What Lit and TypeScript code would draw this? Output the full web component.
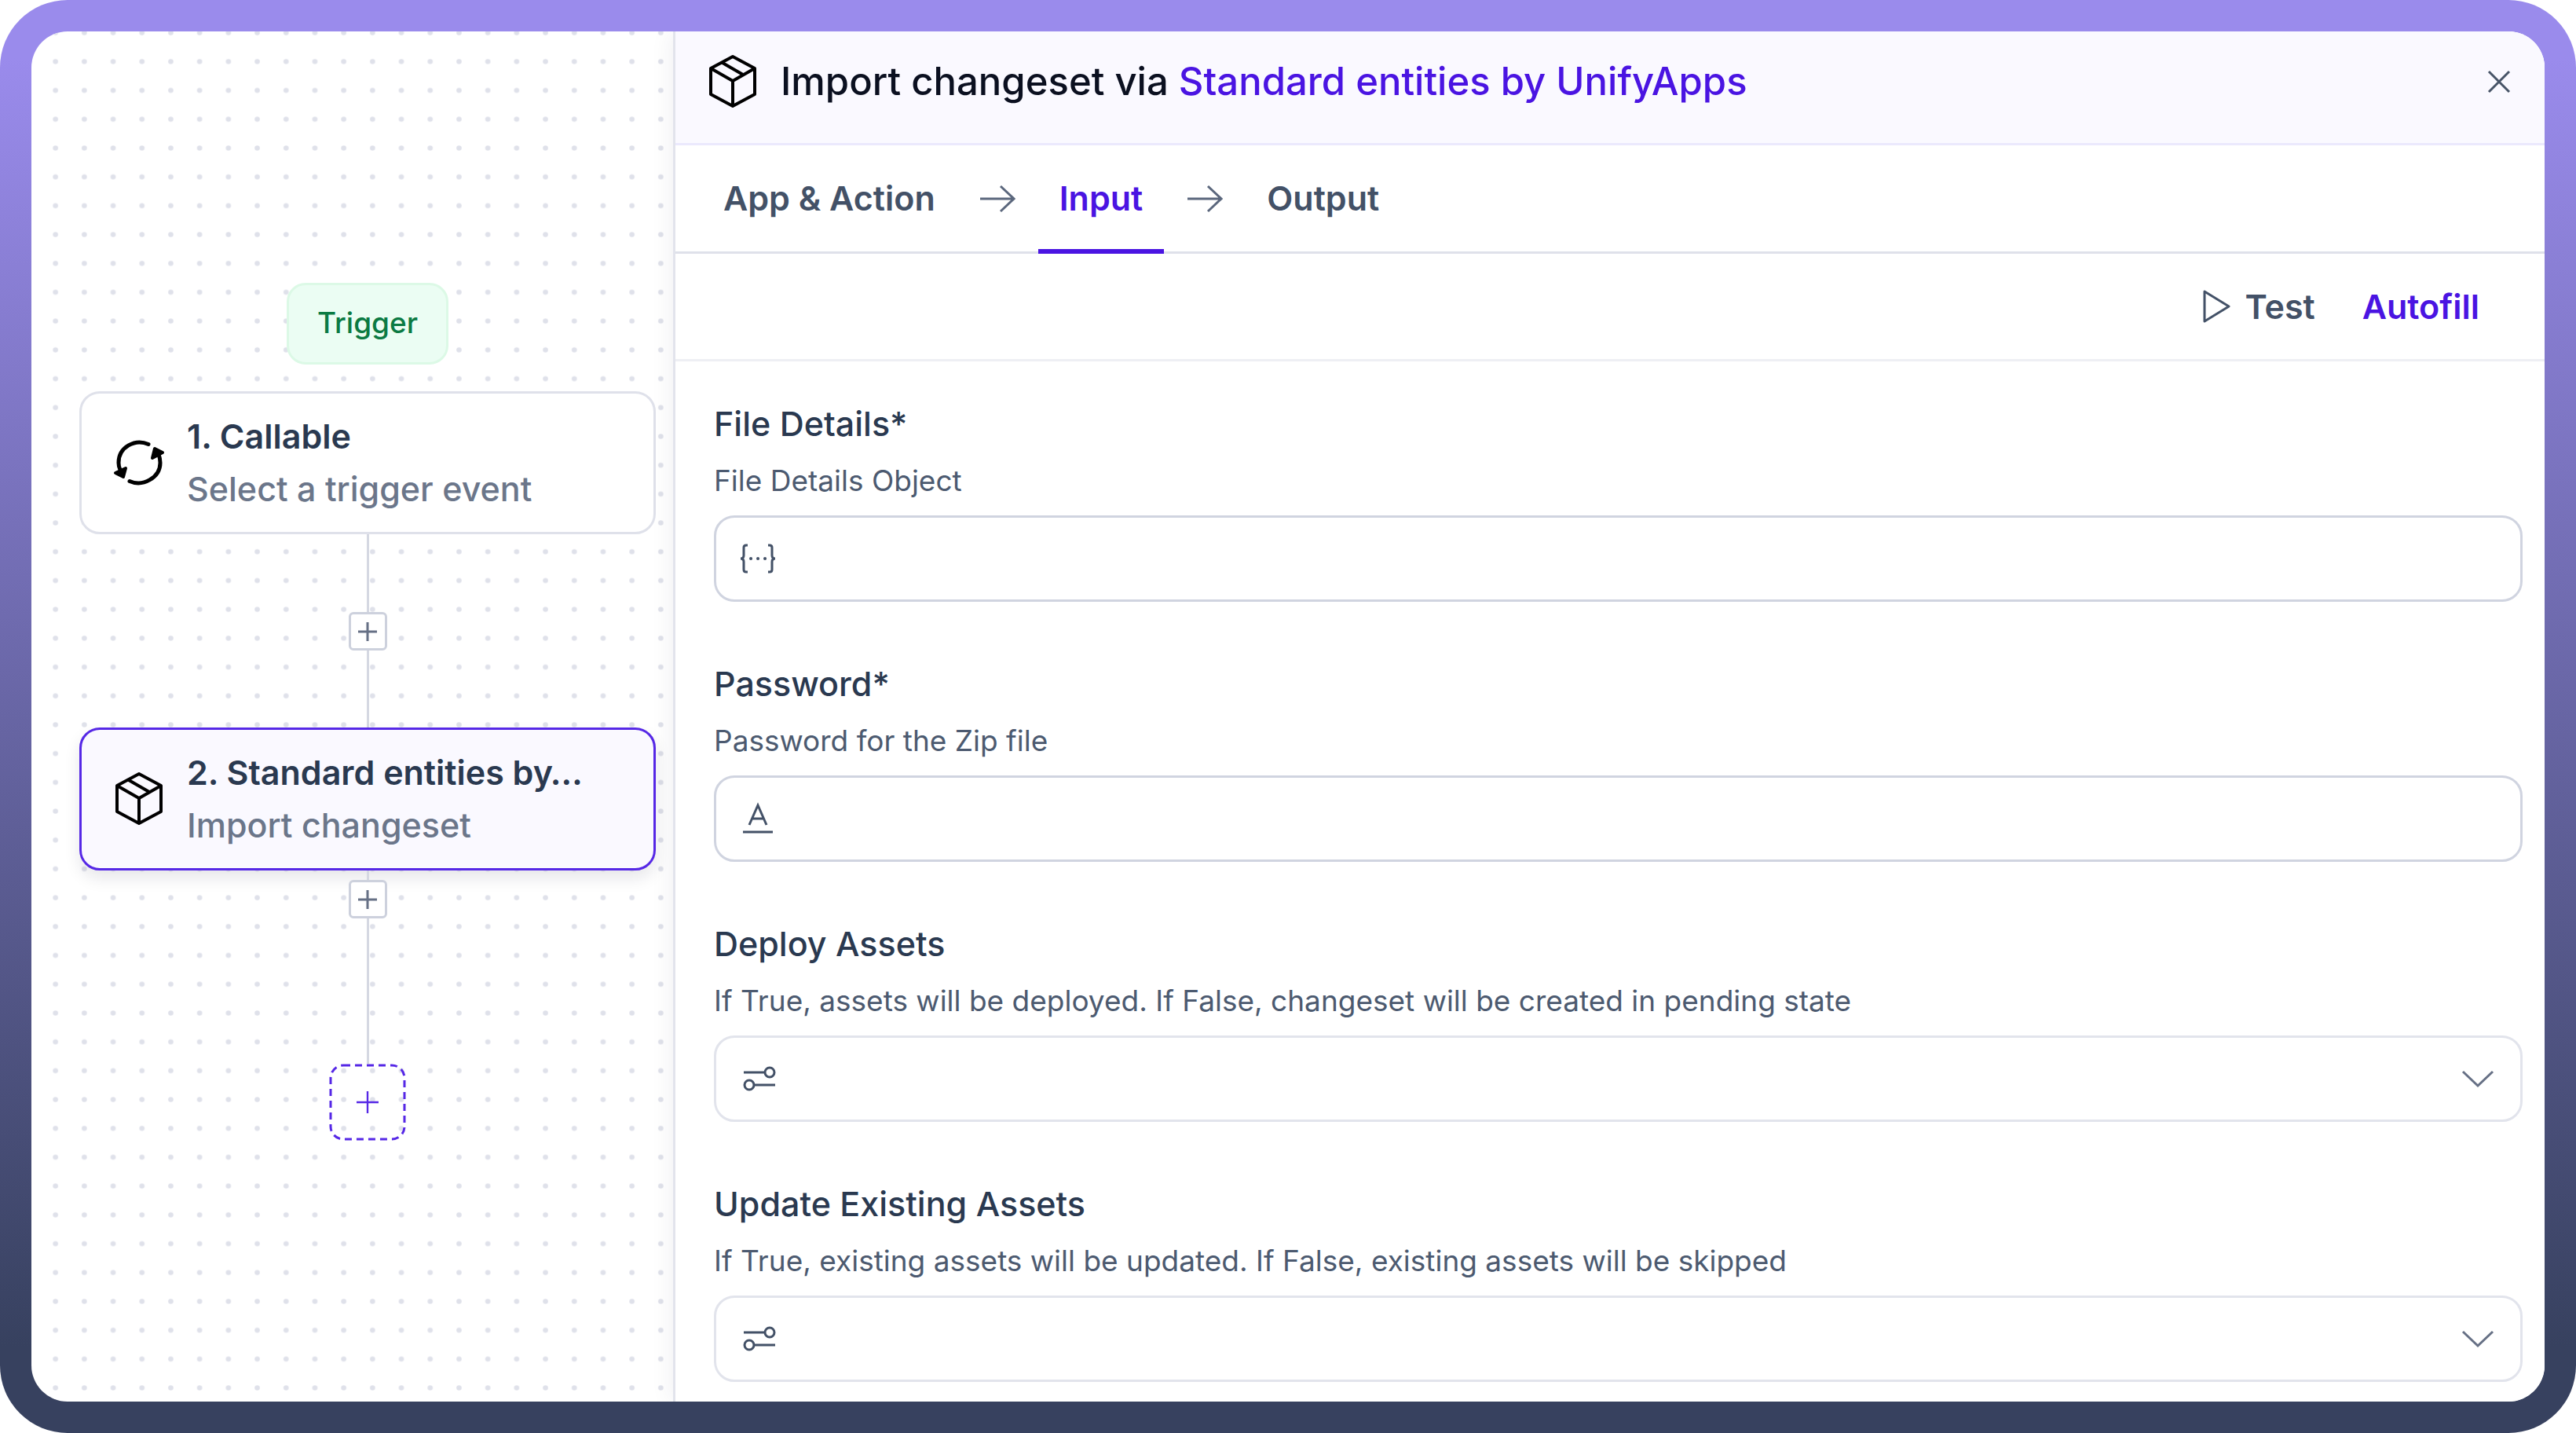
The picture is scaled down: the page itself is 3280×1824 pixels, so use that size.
import { LitElement, html, css, svg } from "lit";
import { customElement } from "lit/decorators.js";

const cube = html`<svg class="cube" viewBox="0 0 66 70" aria-hidden="true">
  <path d="M33 3 L61 18 V51 L33 66 L5 51 V18 Z M5 18 L33 34 L61 18 M33 34 V66 M20 11 L46 26" />
</svg>`;

const sync = html`<svg class="sync" viewBox="0 0 66 66" aria-hidden="true">
  <path class="arc" d="M45 9.5 C28 2 7 13 7 33 Q7 38 9 42" />
  <path class="arc" d="M21 56.5 C38 64 60 52 60 33 Q60 28 58 22" />
  <path class="tip" d="M3 46 L16 40 L13 51 Z M63 20 L50 27 L53 15 Z" />
</svg>`;

const plus = html`<svg class="plus" viewBox="0 0 24 24" aria-hidden="true"><path d="M12 0 V24 M0 12 H24" /></svg>`;
const arrow = html`<svg class="arrow" viewBox="0 0 46 36" aria-hidden="true"><path d="M1 18 H44 M27 2 L44 18 L27 34" /></svg>`;
const chevron = html`<svg class="chevron" viewBox="0 0 44 24" aria-hidden="true"><path d="M3 3 L22 21 L41 3" /></svg>`;

const kinds: Record<string, unknown> = {
  object: svg`<path d="M11 5 H9 Q6 5 6 8 V18 Q6 22 2 22 Q6 22 6 26 V36 Q6 39 9 39 H11 M37 5 H39 Q42 5 42 8 V18 Q42 22 46 22 Q42 22 42 26 V36 Q42 39 39 39 H37" /><path class="dots" d="M15 22 h.1 M24 22 h.1 M33 22 h.1" />`,
  text: svg`<path d="M13 30 L24 5 L35 30 M17 22 H31 M5 39 H43" />`,
  toggle: svg`<path d="M6 14 H32 M20 30 H46" /><circle cx="39" cy="14" r="6" /><circle cx="13" cy="30" r="6" />`,
};

const fields = [
  { id: "file-details", label: "File Details*", hint: "File Details Object", kind: "object", select: false },
  { id: "password", label: "Password*", hint: "Password for the Zip file", kind: "text", select: false },
  { id: "deploy", label: "Deploy Assets", hint: "If True, assets will be deployed. If False, changeset will be created in pending state", kind: "toggle", select: true },
  { id: "update", label: "Update Existing Assets", hint: "If True, existing assets will be updated. If False, existing assets will be skipped", kind: "toggle", select: true },
];

@customElement("app-root")
export class AppRoot extends LitElement {
  static styles = css`
    :host {
      display: block;
      font-family: Inter, "Liberation Sans", sans-serif;
      color: #2a3950;
      --purple: #4a14e2;
      --line: #dfe1ea;
    }
    * { box-sizing: border-box; }
    svg { display: block; flex: none; fill: none; stroke: currentColor; }
    button { font: inherit; color: inherit; background: none; border: 0; padding: 0; margin: 0; cursor: pointer; }
    .frame {
      min-height: 100vh;
      padding: 40px;
      border-radius: 86px;
      background: linear-gradient(#9a8bec 0%, #9a8bec 4%, #37415f 94%, #37415f 100%);
      display: flex;
    }
    .window {
      flex: 1;
      display: grid;
      grid-template-columns: minmax(0, 820px) minmax(0, 1fr);
      background: #fff;
      border-radius: 46px;
      overflow: hidden;
    }
    .canvas { position: relative; padding: 320px 25px 0 61px; display: flex; flex-direction: column; align-items: center; }
    .grid { position: absolute; inset: 0; width: 100%; height: 100%; stroke: none; }
    .grid circle { fill: #dfe1ea; }
    .flow { position: relative; width: 100%; display: flex; flex-direction: column; align-items: center; }
    .trigger {
      border: 3px solid #dcf9e6;
      border-radius: 24px;
      background: #ebfdf3;
      color: #0b7a43;
      font-size: 37px;
      font-weight: 500;
      line-height: 56px;
      padding: 20px 36px 22px;
      margin-bottom: 34px;
    }
    .node {
      width: 100%;
      display: flex;
      align-items: center;
      gap: 28px;
      padding: 21px 40px;
      border: 3px solid var(--line);
      border-radius: 26px;
      background: #fff;
      text-align: left;
    }
    .node.active { border-color: #5628e6; background: #faf9ff; box-shadow: 0 10px 20px rgba(20, 20, 50, 0.1); }
    .node-text { min-width: 0; display: flex; flex-direction: column; font-size: 43px; line-height: 67px; white-space: nowrap; }
    .node-title { font-weight: 600; }
    .node-sub { font-weight: 500; color: #6b768a; }
    .sync { width: 66px; height: 66px; color: #000; }
    .sync .arc { stroke-width: 5; stroke-linecap: round; }
    .sync .tip { fill: currentColor; stroke-width: 4; stroke-linejoin: round; }
    .cube { width: 66px; height: 70px; color: #000; stroke-width: 4; stroke-linejoin: round; }
    .wire { width: 3px; background: #d5d8e2; }
    .w-top { height: 99px; }
    .w-mid { height: 98px; }
    .w-short { height: 12px; }
    .w-long { height: 185px; }
    .add {
      width: 49px;
      height: 49px;
      border: 3px solid #cdd1dd;
      border-radius: 6px;
      background: #fff;
      color: #667085;
      display: grid;
      place-items: center;
    }
    .plus { width: 24px; height: 24px; stroke-width: 3; }
    .add-end { width: 98px; height: 98px; color: #5628e6; display: grid; place-items: center; }
    .add-end > * { grid-area: 1 / 1; }
    .dash { width: 98px; height: 98px; stroke-width: 3; stroke-dasharray: 9 6; }
    .add-end .plus { width: 28px; height: 28px; stroke-width: 2; }

    .panel { border-left: 3px solid #e2e4ec; margin-left: -3px; background: #fff; position: relative; box-shadow: -6px 0 24px rgba(20, 20, 50, 0.05); }
    .head { display: flex; align-items: center; gap: 28px; height: 145px; padding: 0 43px 14px 40px; background: #faf9ff; border-bottom: 3px solid #ebe9fd; }
    .title { flex: 1; margin: 0; font-size: 49px; line-height: 64px; font-weight: 500; color: #0b1020; }
    .title a { color: var(--purple); text-decoration: none; }
    .close { color: #475467; }
    .close svg { width: 30px; height: 30px; stroke-width: 3; }
    .tabs { display: flex; align-items: stretch; height: 138px; padding: 0 34px; border-bottom: 3px solid var(--line); font-size: 43px; font-weight: 600; color: #435167; }
    .tab { padding: 0 27px 4px; margin-bottom: -3px; border-bottom: 6px solid transparent; border-top: 6px solid transparent; }
    .tab.on { color: var(--purple); border-bottom-color: var(--purple); }
    .arrow { width: 46px; height: 36px; margin: 0 29px; align-self: center; stroke-width: 3; color: #5b677d; }
    .tools { display: flex; align-items: center; justify-content: flex-end; gap: 60px; height: 137px; padding-right: 83px; border-bottom: 3px solid #eeeff4; font-size: 43px; font-weight: 600; color: #435167; }
    .test { display: flex; align-items: center; gap: 18px; }
    .play { width: 36px; height: 42px; stroke-width: 3; stroke-linejoin: round; }
    .auto { color: var(--purple); }
    .form { display: flex; flex-direction: column; gap: 70px; padding: 45px 28px 24px 49px; }
    .field { display: flex; flex-direction: column; }
    .label { font-size: 43px; line-height: 68px; font-weight: 500; }
    .hint { margin: 0 0 5px; font-size: 37px; line-height: 78px; color: #4c5a70; }
    .box { display: grid; align-items: center; }
    .box > * { grid-area: 1 / 1; }
    .control {
      appearance: none;
      width: 100%;
      height: 110px;
      margin: 0;
      padding: 0 100px;
      border: 3px solid #d0d4e0;
      border-radius: 26px;
      background: #fff;
      font: inherit;
      font-size: 43px;
      color: inherit;
    }
    select.control { border-color: #e2e4ec; }
    .kind { width: 48px; height: 44px; margin-left: 32px; stroke-width: 3; color: #435167; pointer-events: none; z-index: 1; }
    .kind .dots { stroke-width: 4; stroke-linecap: round; }
    .chevron { width: 44px; height: 24px; margin-right: 35px; justify-self: end; stroke-width: 3; color: #667085; pointer-events: none; z-index: 1; }
  `;

  render() {
    return html`<div class="frame">
      <div class="window">
        <section class="canvas" aria-label="Workflow">
          <svg class="grid" aria-hidden="true">
            <defs>
              <pattern id="dots" x="12.3" y="20" width="36.7" height="36.7" patternUnits="userSpaceOnUse">
                <circle cx="18.35" cy="18.35" r="3.3" />
              </pattern>
            </defs>
            <rect width="100%" height="100%" fill="url(#dots)" />
          </svg>
          <div class="flow">
            <span class="trigger">Trigger</span>
            <button class="node">${sync}
              <span class="node-text"><span class="node-title">1. Callable</span><span class="node-sub">Select a trigger event</span></span>
            </button>
            <span class="wire w-top"></span>
            <button class="add" aria-label="Add step">${plus}</button>
            <span class="wire w-mid"></span>
            <button class="node active">${cube}
              <span class="node-text"><span class="node-title">2. Standard entities by…</span><span class="node-sub">Import changeset</span></span>
            </button>
            <span class="wire w-short"></span>
            <button class="add" aria-label="Add step">${plus}</button>
            <span class="wire w-long"></span>
            <button class="add-end" aria-label="Add final step">
              <svg class="dash" viewBox="0 0 98 98" aria-hidden="true"><rect x="2" y="2" width="94" height="94" rx="16" /></svg>
              ${plus}
            </button>
          </div>
        </section>
        <main class="panel">
          <header class="head">
            ${cube}
            <h1 class="title">Import changeset via <a href="#app">Standard entities by UnifyApps</a></h1>
            <button class="close" aria-label="Close"><svg viewBox="0 0 30 30"><path d="M2 2 L28 28 M28 2 L2 28" /></svg></button>
          </header>
          <nav class="tabs">
            <button class="tab">App &amp; Action</button>${arrow}
            <button class="tab on">Input</button>${arrow}
            <button class="tab">Output</button>
          </nav>
          <div class="tools">
            <button class="test"><svg class="play" viewBox="0 0 36 42" aria-hidden="true"><path d="M3 2 V40 L34 21 Z" /></svg>Test</button>
            <button class="auto">Autofill</button>
          </div>
          <form class="form">
            ${fields.map((f) => html`<div class="field">
              <label class="label" for=${f.id}>${f.label}</label>
              <p class="hint" id="${f.id}-hint">${f.hint}</p>
              <div class="box">
                ${f.select
                  ? html`<select class="control" id=${f.id} aria-describedby="${f.id}-hint"><option></option></select>`
                  : html`<input class="control" id=${f.id} aria-describedby="${f.id}-hint" />`}
                <svg class="kind" viewBox="0 0 48 44" aria-hidden="true">${kinds[f.kind]}</svg>
                ${f.select ? chevron : ""}
              </div>
            </div>`)}
          </form>
        </main>
      </div>
    </div>`;
  }
}
